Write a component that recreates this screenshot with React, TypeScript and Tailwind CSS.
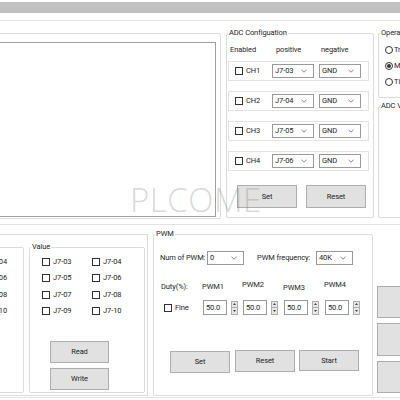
import React from "react";

type BoxProps = { title?: string; className?: string; children?: React.ReactNode };

function GroupBox({ title, className = "", children }: BoxProps) {
  return (
    <div className={`shrink-0 rounded-[2px] border border-[#dcdcdc] ${className}`}>
      {title && (
        <div className="-mt-[6px] ml-[1px] w-fit whitespace-nowrap bg-white px-[1px] leading-[10px]">{title}</div>
      )}
      {children}
    </div>
  );
}

function CheckBox() {
  return <span className="block size-[8px] shrink-0 border border-[#333] bg-white" />;
}

function Chevron() {
  return (
    <svg width="6" height="4" viewBox="0 0 6 4" className="mr-[6px] shrink-0">
      <polyline points="0.5,0.8 3,3.2 5.5,0.8" fill="none" stroke="#666" strokeWidth="0.8" />
    </svg>
  );
}

function Combo({ value, className = "" }: { value: string; className?: string }) {
  return (
    <div className={`flex h-[14px] shrink-0 items-center border border-[#9a9a9a] bg-white pl-[2px] ${className}`}>
      <span className="flex-1 leading-none">{value}</span>
      <Chevron />
    </div>
  );
}

function Btn({ label, className = "" }: { label?: string; className?: string }) {
  return (
    <div className={`flex shrink-0 items-center justify-center border border-[#adadad] bg-[#e1e1e1] ${className}`}>
      {label}
    </div>
  );
}

function Spin() {
  return (
    <div className="ml-[4px] flex h-[14px] w-[7px] shrink-0 flex-col border border-[#adadad] bg-[#e8e8e8]">
      <div className="flex flex-1 items-center justify-center border-b border-[#adadad]">
        <svg width="3" height="2" viewBox="0 0 3 2">
          <polygon points="1.5,0 3,2 0,2" fill="#444" />
        </svg>
      </div>
      <div className="flex flex-1 items-center justify-center">
        <svg width="3" height="2" viewBox="0 0 3 2">
          <polygon points="0,0 3,0 1.5,2" fill="#444" />
        </svg>
      </div>
    </div>
  );
}

function Radio({ checked }: { checked?: boolean }) {
  return (
    <span className="flex size-[8px] shrink-0 items-center justify-center rounded-full border border-[#333] bg-white">
      {checked && <span className="block size-[4px] rounded-full bg-[#333]" />}
    </span>
  );
}

const channels = [
  { ch: "CH1", pos: "J7-03" },
  { ch: "CH2", pos: "J7-04" },
  { ch: "CH3", pos: "J7-05" },
  { ch: "CH4", pos: "J7-06" },
];

const pins = [
  ["J7-03", "J7-04"],
  ["J7-05", "J7-06"],
  ["J7-07", "J7-08"],
  ["J7-09", "J7-10"],
];

const pwmCols = [
  { name: "PWM1", cls: "w-[40px] leading-[10px]" },
  { name: "PWM2", cls: "w-[41px] leading-[6px]" },
  { name: "PWM3", cls: "w-[41px] leading-[12px]" },
  { name: "PWM4", cls: "w-[41px] leading-[6px]" },
];

export default function App() {
  return (
    <div className="relative h-[400px] w-[400px] overflow-hidden bg-white font-['Roboto','Noto_Sans',sans-serif] text-[7.5px] tracking-[-0.1px] text-[#1e1e1e]">
      <div className="mt-[2px] h-[11px] bg-[#c1c1c1]" />
      <div className="h-[7px]" />

      {/* upper tab area */}
      <div className="flex h-[205px] border-y border-[#e3e3e3] pt-[12px]">
        <GroupBox className="ml-[-5px] h-[186px] w-[226px]">
          <div className="mt-[8px] ml-[1px] mr-[4px] h-[175px] border border-[#a0a0a0]" />
        </GroupBox>

        <GroupBox title="ADC Configuation" className="ml-[5px] h-[185px] w-[148px]">
          <div className="mt-[7px] flex h-[10px] items-center pl-[3px]">
            <span className="w-[46px]">Enabled</span>
            <span className="w-[45px]">positive</span>
            <span>negative</span>
          </div>
          <div className="mt-[6px] ml-[1px] flex flex-col gap-[10px]">
            {channels.map((c) => (
              <div key={c.ch} className="flex h-[20px] w-[141px] items-center border border-[#e3e3e3]">
                <div className="flex w-[43px] shrink-0 items-center pl-[6px]">
                  <CheckBox />
                  <span className="ml-[3px]">{c.ch}</span>
                </div>
                <Combo value={c.pos} className="w-[42px]" />
                <Combo value="GND" className="ml-[5px] w-[42px]" />
              </div>
            ))}
          </div>
          <div className="mt-[14px] ml-[10px] flex">
            <Btn label="Set" className="h-[23px] w-[60px]" />
            <Btn label="Reset" className="ml-[9px] h-[23px] w-[60px]" />
          </div>
        </GroupBox>

        <div className="ml-[4px] flex w-[40px] shrink-0 flex-col">
          <GroupBox title="Operation mode" className="h-[65px]">
            <div className="mt-[7px] flex flex-col gap-[6px] pl-[6px]">
              {[
                ["Trigger", false],
                ["Manual", true],
                ["Timer", false],
              ].map(([t, on]) => (
                <div key={t as string} className="flex h-[10px] items-center whitespace-nowrap">
                  <Radio checked={on as boolean} />
                  <span className="ml-[1px]">{t as string}</span>
                </div>
              ))}
            </div>
          </GroupBox>
          <GroupBox title="ADC Value" className="mt-[8px] h-[112px]" />
        </div>
      </div>

      {/* lower area */}
      <div className="mt-[9px] flex border-b border-[#e3e3e3] pb-[1px]">
        <div className="ml-[-5px] flex h-[162px] w-[153px] shrink-0 border border-[#dcdcdc] pt-[12px]">
          <GroupBox className="ml-[-26px] h-[146px] w-[54px]">
            <div className="mt-[8px] mr-[16px] flex flex-col items-end gap-[5.5px]">
              {pins.map((p) => (
                <div key={p[1]} className="flex h-[11px] items-center">
                  {p[1]}
                </div>
              ))}
            </div>
          </GroupBox>

          <GroupBox title="Value" className="ml-[5px] flex h-[146px] w-[116px] flex-col">
            <div className="mt-[4px] flex flex-col gap-[5.5px] pl-[12px]">
              {pins.map((p) => (
                <div key={p[0]} className="flex h-[11px] items-center">
                  <div className="flex w-[50px] items-center">
                    <CheckBox />
                    <span className="ml-[3px]">{p[0]}</span>
                  </div>
                  <div className="flex items-center">
                    <CheckBox />
                    <span className="ml-[3px]">{p[1]}</span>
                  </div>
                </div>
              ))}
            </div>
            <div className="mt-auto mb-[2px] ml-[20px] flex flex-col gap-[5px]">
              <Btn label="Read" className="h-[22px] w-[59px]" />
              <Btn label="Write" className="h-[22px] w-[59px]" />
            </div>
          </GroupBox>
        </div>

        <GroupBox title="PWM" className="ml-[5px] h-[162px] w-[220px]">
          <div className="mt-[12px] flex h-[14px] items-center pl-[6px]">
            <span className="w-[47px] shrink-0 whitespace-nowrap">Num of PWM:</span>
            <Combo value="0" className="w-[37px]" />
            <span className="ml-[13px] w-[59px] shrink-0 whitespace-nowrap">PWM frequency:</span>
            <Combo value="40K" className="w-[37px]" />
          </div>

          <div className="mt-[17px] flex pl-[7px]">
            <div className="flex w-[42px] shrink-0 flex-col">
              <div className="h-[10px] leading-[10px]">Duty(%):</div>
              <div className="mt-[8px] flex h-[15px] items-center pl-[3px]">
                <CheckBox />
                <span className="ml-[3px]">Fine</span>
              </div>
            </div>
            {pwmCols.map((c) => (
              <div key={c.name} className={`flex shrink-0 flex-col ${c.cls}`}>
                <div className="-ml-[1px] h-[10px]">{c.name}</div>
                <div className="mt-[8px] flex h-[15px] items-center">
                  <div className="flex h-[15px] w-[24px] items-center border border-[#9a9a9a] pl-[2px] leading-none">
                    50.0
                  </div>
                  <Spin />
                </div>
              </div>
            ))}
          </div>

          <div className="mt-[35px] flex items-start pl-[16px]">
            <Btn label="Set" className="mt-[1px] h-[22px] w-[60px]" />
            <Btn label="Reset" className="ml-[5px] h-[22px] w-[60px]" />
            <Btn label="Start" className="ml-[4px] h-[21px] w-[60px]" />
          </div>
        </GroupBox>

        <div className="ml-[4px] mt-[52px] flex shrink-0 flex-col gap-[5px]">
          <Btn className="h-[32px] w-[60px]" />
          <Btn className="h-[33px] w-[60px]" />
          <Btn className="h-[32px] w-[60px]" />
        </div>
      </div>

      <span className="pointer-events-none absolute left-[130px] top-[183px] font-['Open_Sans',sans-serif] text-[33px] leading-none font-light tracking-[0.5px] text-[#7a7a7a]/30">
        PLCOME
      </span>
    </div>
  );
}
